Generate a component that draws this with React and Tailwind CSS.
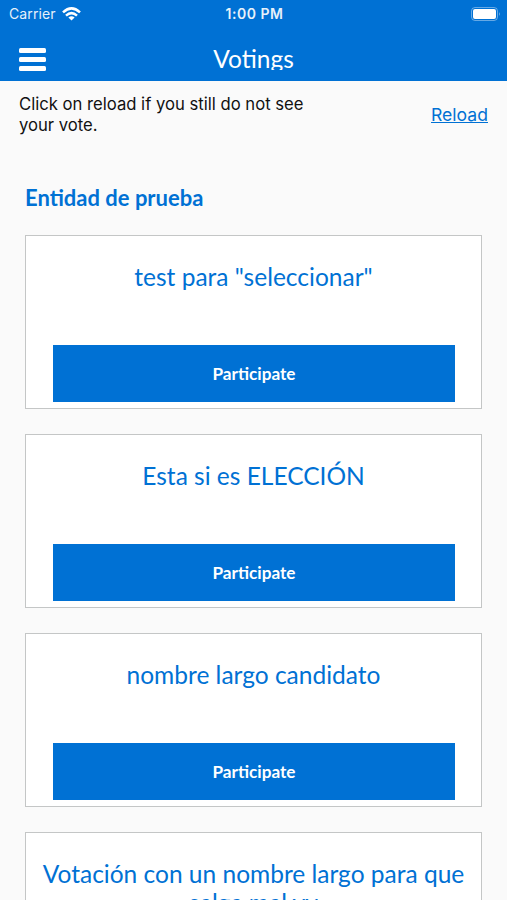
import React from 'react';

const votings = [
  { id: 1, name: 'test para "seleccionar"' },
  { id: 2, name: 'Esta si es ELECCIÓN' },
  { id: 3, name: 'nombre largo candidato' },
  { id: 4, name: 'Votación con un nombre largo para que salga mal yy' },
];

function StatusBar() {
  return (
    <div className="grid h-[27px] grid-cols-3 items-center pl-[9px] pr-[6px] font-['Inter',sans-serif] text-[14px] text-white">
      <div className="flex items-center gap-[6px]">
        <span className="tracking-[0.1px] opacity-90">Carrier</span>
        <svg width="19" height="14" viewBox="0 0 19 14" fill="none" stroke="currentColor" strokeWidth="2.5">
          <path d="M1 5.3 Q9.5 -2.6 18 5.3" />
          <path d="M4 8.6 Q9.5 3.6 15 8.6" />
          <path d="M9.5 13.6 L6.4 10.6 Q9.5 8 12.6 10.6 Z" fill="currentColor" stroke="none" />
        </svg>
      </div>
      <span className="-ml-px text-center text-[14px] font-semibold tracking-[0.5px] opacity-90">1:00 PM</span>
      <svg className="justify-self-end" width="30" height="14" viewBox="0 0 30 14">
        <rect x="0.5" y="0.5" width="26" height="13" rx="3.5" fill="none" stroke="#fff" strokeOpacity="0.4" />
        <rect x="2" y="2" width="23" height="10" rx="2" fill="#fff" />
        <path d="M28 5 Q29.8 7 28 9 Z" fill="#fff" fillOpacity="0.5" />
      </svg>
    </div>
  );
}

function VotingCard({ name }) {
  return (
    <div className="flex h-[174px] flex-col justify-between border border-[#c4c6c6] bg-white px-[15px] pb-[6px] pt-[26px]">
      <h3 className="text-center text-[24.5px] leading-[29px] text-[#0071d4]">{name}</h3>
      <button className="ml-[12px] mr-[11px] h-[57px] shrink-0 bg-[#0071d4] text-[17.2px] font-bold text-white">
        Participate
      </button>
    </div>
  );
}

function App() {
  return (
    <div className="h-[900px] overflow-hidden bg-[#fafafa] font-['Lato',sans-serif]">
      {/* Header */}
      <header className="h-[81px] bg-[#0071d4] text-white">
        <StatusBar />
        <div className="grid h-[54px] grid-cols-[1fr_auto_1fr] items-start px-[19px] pt-[21px]">
          <button className="flex w-[27px] flex-col gap-[4px]" aria-label="Menu">
            <span className="h-[5px] w-full rounded-[1.5px] bg-white"></span>
            <span className="h-[5px] w-full rounded-[1.5px] bg-white"></span>
            <span className="h-[5px] w-full rounded-[1.5px] bg-white"></span>
          </button>
          <h1 className="h-[22px] overflow-hidden text-[24.5px] leading-[22px]">Votings</h1>
        </div>
      </header>

      {/* Reload message */}
      <div className="flex h-[68px] justify-between px-[19px] pt-[13px] font-['Inter',sans-serif]">
        <p className="w-[300px] text-[16.65px] leading-[21px] text-[#111]">
          Click on reload if you still do not see your vote.
        </p>
        <a className="mt-[9px] text-[17.6px] leading-[24px] text-[#0071d4] underline" href="#">Reload</a>
      </div>

      {/* Votings list */}
      <main className="px-[25px] pt-[34px]">
        <h2 className="mb-[22px] text-[22px] font-bold leading-[30px] text-[#0071d4]">Entidad de prueba</h2>
        <div className="flex flex-col gap-[25px]">
          {votings.map((voting) => (
            <VotingCard key={voting.id} name={voting.name} />
          ))}
        </div>
      </main>
    </div>
  );
}

export default App;
